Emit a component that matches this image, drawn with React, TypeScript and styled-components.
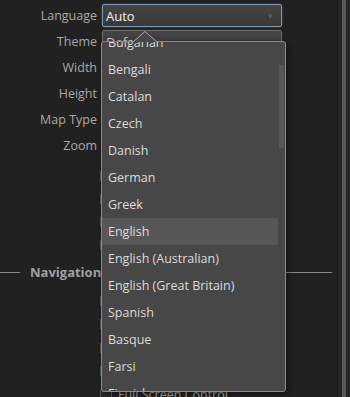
import React from "react";
import styled, { createGlobalStyle } from "styled-components";

const languages = [
  "Bulgarian",
  "Bengali",
  "Catalan",
  "Czech",
  "Danish",
  "German",
  "Greek",
  "English",
  "English (Australian)",
  "English (Great Britain)",
  "Spanish",
  "Basque",
  "Farsi",
  "Finnish",
  "French",
];

const fields = ["Language", "Theme", "Width", "Height", "Map Type", "Zoom"];

const App: React.FC = () => {
  return (
    <Page>
      <GlobalStyle />
      <Content>
        <FieldRow>
          <Label>Language</Label>
          <Select $active>
            <SelectText $bright>Auto</SelectText>
            <Arrow>▾</Arrow>
          </Select>
        </FieldRow>
        <FieldRow>
          <Label>Theme</Label>
          <Select>
            <SelectText>Default</SelectText>
          </Select>
        </FieldRow>
        {fields.slice(2).map((f) => (
          <FieldRow key={f}>
            <Label>{f}</Label>
            <Select>
              <SelectText />
            </Select>
          </FieldRow>
        ))}
        <CheckList>
          {[0, 1, 2, 3].map((i) => (
            <CheckRow key={i}>
              <Box />
              <CheckText>Option</CheckText>
            </CheckRow>
          ))}
        </CheckList>
        <Section>
          <Line $w={20} />
          <SectionTitle>Navigation</SectionTitle>
          <Line />
        </Section>
        <CheckList $tight>
          {["Pan", "Zoom", "Scale", "Street View"].map((t) => (
            <CheckRow key={t} $tight>
              <Box />
              <CheckText>{t}</CheckText>
            </CheckRow>
          ))}
          <CheckRow $tight>
            <Box />
            <CheckText>Full Screen Control</CheckText>
          </CheckRow>
        </CheckList>

        <Dropdown>
          <Caret width="24" height="11" viewBox="0 0 24 11">
            <path d="M0 11 L12 0.5 L24 11" fill="#474747" stroke="#a8a8a8" strokeWidth="1" />
          </Caret>
          <List>
            {languages.map((l) => (
              <Item key={l} $selected={l === "English"}>
                {l}
              </Item>
            ))}
          </List>
          <InnerThumb />
        </Dropdown>
      </Content>
      <Track>
        <Thumb />
      </Track>
    </Page>
  );
};

const GlobalStyle = createGlobalStyle`
  html, body {
    margin: 0;
    padding: 0;
    background: #212121;
    overflow: hidden;
  }
  body {
    font-family: "Open Sans", "Noto Sans", sans-serif;
  }
`;

const Page = styled.div`
  display: flex;
  width: 350px;
  height: 397px;
  overflow: hidden;
  background: #212121;
`;

const Content = styled.div`
  position: relative;
  flex: 1;
  display: flex;
  flex-direction: column;
  gap: 3px;
  padding-top: 4px;
  padding-right: 5px;
`;

const FieldRow = styled.div`
  display: grid;
  grid-template-columns: 97px 180px;
  column-gap: 5px;
  align-items: center;
  height: 23px;
`;

const Label = styled.span`
  text-align: right;
  color: #a9a9a9;
  font-size: 12.5px;
  line-height: 23px;
`;

const Select = styled.div<{ $active?: boolean }>`
  box-sizing: border-box;
  height: 23px;
  display: flex;
  align-items: center;
  justify-content: space-between;
  padding: 0 8px 0 3px;
  border: 1px solid ${(p) => (p.$active ? "#8598ad" : "#6e6e6e")};
  border-radius: 2px;
  background: linear-gradient(#444444, #393939);
  box-shadow: ${(p) => (p.$active ? "0 0 2px rgba(120,150,190,0.5)" : "none")};
`;

const SelectText = styled.span<{ $bright?: boolean }>`
  color: ${(p) => (p.$bright ? "#f4f4f4" : "#cfcfcf")};
  font-size: 13px;
`;

const Arrow = styled.span`
  color: #5e5e5e;
  font-size: 9px;
`;

const CheckList = styled.div<{ $tight?: boolean }>`
  display: flex;
  flex-direction: column;
  padding-left: 100px;
  margin-top: ${(p) => (p.$tight ? "6px" : "4px")};
`;

const CheckRow = styled.div<{ $tight?: boolean }>`
  display: flex;
  align-items: center;
  gap: 6px;
  height: ${(p) => (p.$tight ? "23.5px" : "23px")};
`;

const Box = styled.span`
  box-sizing: border-box;
  width: 12px;
  height: 12px;
  border: 1px solid #5a5a5a;
  border-radius: 2px;
  background: #2a2a2a;
`;

const CheckText = styled.span`
  color: #a9a9a9;
  font-size: 12.5px;
`;

const Section = styled.div`
  display: flex;
  align-items: center;
  gap: 10px;
  margin-top: 5px;
  height: 16px;
`;

const Line = styled.span<{ $w?: number }>`
  height: 1px;
  background: #8a8a8a;
  flex: ${(p) => (p.$w ? `0 0 ${p.$w}px` : "1")};
`;

const SectionTitle = styled.span`
  color: #a0a0a0;
  font-weight: 700;
  font-size: 13px;
`;

const Dropdown = styled.div`
  position: absolute;
  left: 101px;
  top: 41px;
  width: 185px;
  height: 351px;
  box-sizing: border-box;
  border: 1px solid #8a8a8a;
  border-radius: 3px;
  background: #474747;
  box-shadow: 2px 2px 6px rgba(0, 0, 0, 0.45);
`;

const Caret = styled.svg`
  position: absolute;
  left: 31px;
  top: -11px;
  display: block;
`;

const List = styled.div`
  height: 100%;
  overflow: hidden;
  padding-right: 6px;
  border-radius: 3px;
`;

const Item = styled.div<{ $selected?: boolean }>`
  height: 27px;
  line-height: 27px;
  padding-left: 6px;
  margin-right: 1px;
  font-size: 12.5px;
  color: #dcdcdc;
  background: ${(p) => (p.$selected ? "#575757" : "transparent")};
  white-space: nowrap;
  &:first-child {
    margin-top: -13px;
  }
`;

const InnerThumb = styled.span`
  position: absolute;
  right: 1px;
  top: 23px;
  width: 5px;
  height: 83px;
  background: #575757;
`;

const Track = styled.div`
  flex: 0 0 12px;
  display: flex;
  justify-content: center;
  background: #262626;
  border-left: 1px solid #1b1b1b;
`;

const Thumb = styled.span`
  width: 4px;
  height: 100%;
  background: #595959;
`;

export default App;
